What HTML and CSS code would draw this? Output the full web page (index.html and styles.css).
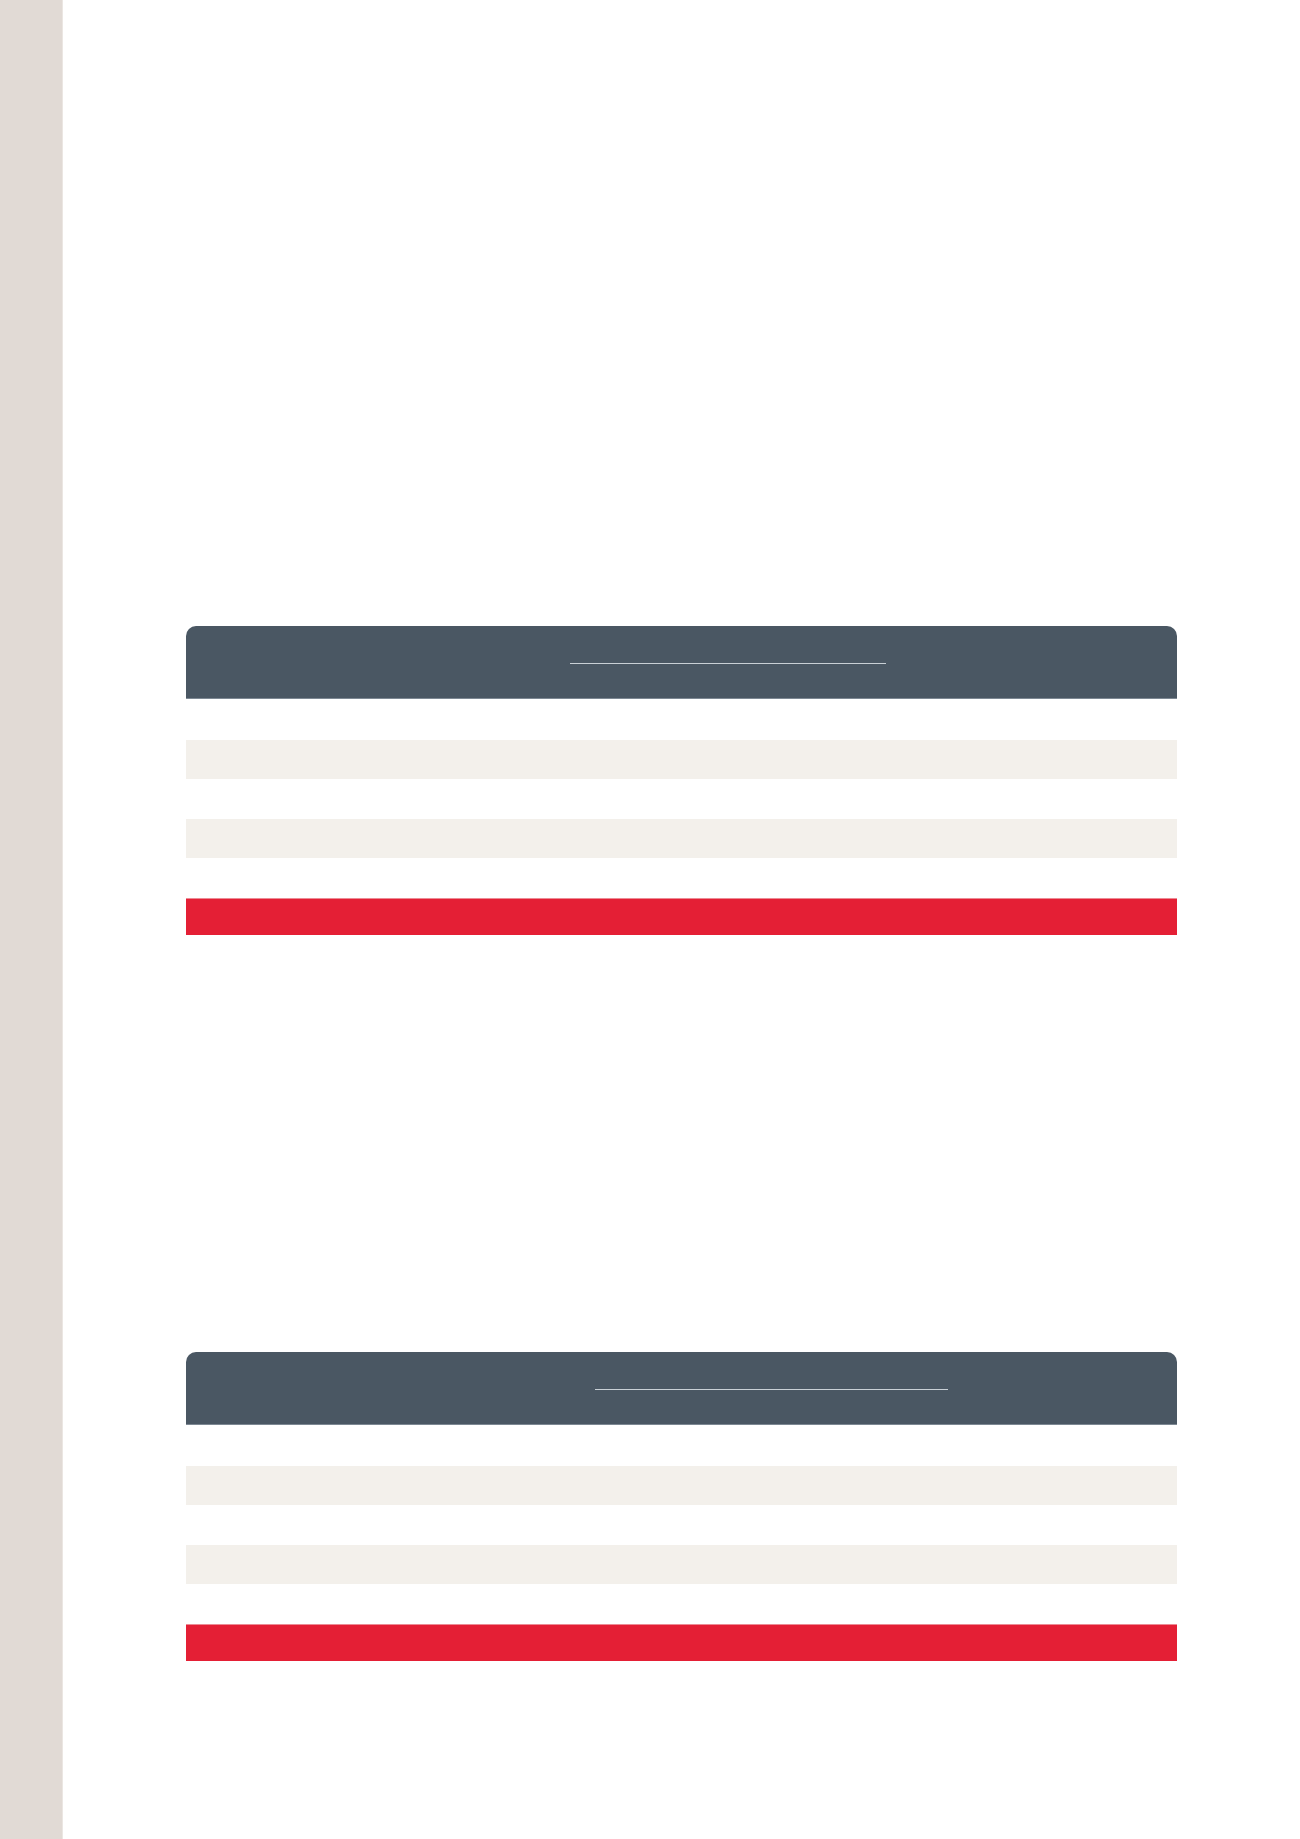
FILE: index.html
```html
<!DOCTYPE html>
<html lang="en">
<head>
<meta charset="utf-8">
<title>Tables</title>
<link rel="stylesheet" href="styles.css">
</head>
<body>
<div class="page">
  <aside class="sidebar"></aside>
  <main class="content">
    <section class="table table-one">
      <div class="thead">
        <div class="group group-one">
          <span class="col"></span><span class="col"></span><span class="col"></span>
        </div>
      </div>
      <div class="row r-a"></div>
      <div class="row r-b stripe"></div>
      <div class="row r-c"></div>
      <div class="row r-b stripe"></div>
      <div class="row r-c"></div>
      <div class="row total"></div>
    </section>
    <section class="table table-two">
      <div class="thead">
        <div class="group group-two">
          <span class="col"></span><span class="col"></span><span class="col"></span>
        </div>
      </div>
      <div class="row r-a"></div>
      <div class="row r-b stripe"></div>
      <div class="row r-c"></div>
      <div class="row r-b stripe"></div>
      <div class="row r-c"></div>
      <div class="row total"></div>
    </section>
  </main>
</div>
</body>
</html>
```
FILE: styles.css
```css
* { box-sizing: border-box; }
html, body { margin: 0; padding: 0; background: #ffffff; font-family: "Liberation Sans", Arial, sans-serif; }
.page { display: flex; min-height: 1839px; }
.sidebar { width: 63px; flex: 0 0 63px; background: #e1dad5; border-right: 1px solid #ebe6e2; }
.content { flex: 1; padding: 626px 0 0 123px; display: flex; flex-direction: column; gap: 417px; }
.table { width: 991px; display: flex; flex-direction: column; }
.thead { height: 73px; background: #4a5763; border-radius: 10px 10px 0 0; border-bottom: 1px solid #7d8893; padding-top: 37px; }
.group { display: flex; height: 1px; border-top: 1px solid #c9d0d6; }
.group-one { margin-left: 384px; width: 316px; }
.group-two { margin-left: 409px; width: 353px; }
.col { flex: 1; }
.row { background: #ffffff; }
.r-a { height: 41px; }
.r-b { height: 39px; }
.r-c { height: 40px; }
.stripe { background: #f3f0eb; }
.total { height: 37px; background: #e41f35; border-top: 1px solid #ec8a94; }
```
